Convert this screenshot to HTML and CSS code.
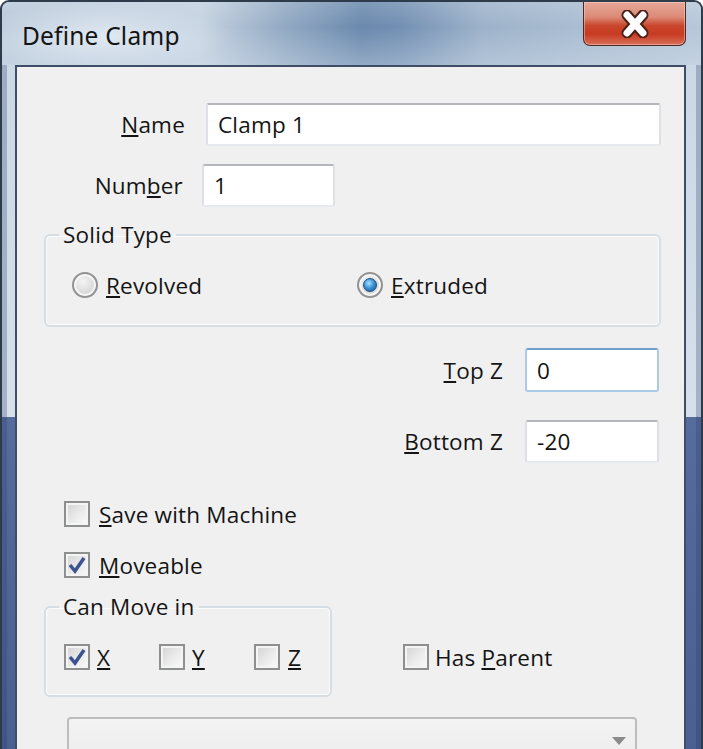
FILE: index.html
```html
<!DOCTYPE html>
<html>
<head>
    <meta charset="utf-8">
    <link rel="stylesheet" href="styles.css">
</head>
<body>

<div class="window">
    <div class="titlebar">
        <span class="title">Define Clamp</span>
        <div class="close_btn">
            <svg width="32" height="28" viewBox="0 0 32 28">
                <path d="M8 5 L24 23 M24 5 L8 23" stroke="#4a2119" stroke-width="11" stroke-linecap="round" fill="none"/>
                <path d="M8 5 L24 23 M24 5 L8 23" stroke="#ffffff" stroke-width="7" stroke-linecap="round" fill="none"/>
            </svg>
        </div>
    </div>

    <div class="client">
        <div class="row row_name">
            <label class="lbl lbl_name"><u>N</u>ame</label>
            <div class="edit edit_name">Clamp 1</div>
        </div>
        <div class="row row_number">
            <label class="lbl lbl_number">Num<u>b</u>er</label>
            <div class="edit edit_number">1</div>
        </div>

        <fieldset class="group group_solid">
            <legend>Solid Type</legend>
            <div class="radios">
                <div class="opt opt_revolved"><span class="radio"></span><span><u>R</u>evolved</span></div>
                <div class="opt"><span class="radio checked"></span><span><u>E</u>xtruded</span></div>
            </div>
        </fieldset>

        <div class="row row_topz">
            <label class="lbl lbl_z"><u>T</u>op Z</label>
            <div class="edit edit_z focused">0</div>
        </div>
        <div class="row row_bottomz">
            <label class="lbl lbl_z"><u>B</u>ottom Z</label>
            <div class="edit edit_z">-20</div>
        </div>

        <div class="check_row row_save">
            <span class="check"></span><span><u>S</u>ave with Machine</span>
        </div>
        <div class="check_row row_move">
            <span class="check">
                <svg width="22" height="22" viewBox="0 0 22 22"><path d="M4 11 L9 17 L18 4" stroke="#3b5490" stroke-width="3.5" fill="none"/></svg>
            </span><span><u>M</u>oveable</span>
        </div>

        <div class="move_row">
            <fieldset class="group group_move">
                <legend>Can Move in</legend>
                <div class="axes">
                    <div class="opt axis">
                        <span class="check">
                            <svg width="22" height="22" viewBox="0 0 22 22"><path d="M4 11 L9 17 L18 4" stroke="#3b5490" stroke-width="3.5" fill="none"/></svg>
                        </span><span><u>X</u></span>
                    </div>
                    <div class="opt axis"><span class="check"></span><span><u>Y</u></span></div>
                    <div class="opt"><span class="check"></span><span><u>Z</u></span></div>
                </div>
            </fieldset>
            <div class="opt has_parent"><span class="check"></span><span>Has <u>P</u>arent</span></div>
        </div>

        <div class="combo">
            <span class="arrow"></span>
        </div>
    </div>
</div>

</body>
</html>
```

FILE: styles.css
```css
body {
    margin: 0;
    background: #ffffff;
    font-family: "Open Sans", "Noto Sans", sans-serif;
    font-size: 22.5px;
    letter-spacing: 0.2px;
    color: #141414;
}
.window {
    width: 703px;
    height: 749px;
    box-sizing: border-box;
    border: 2px solid #2e3b4b;
    border-bottom: none;
    border-radius: 9px 9px 0 0;
    overflow: hidden;
    display: flex;
    flex-direction: column;
    background:
        linear-gradient(to right, rgba(40, 60, 100, 0.28) 0, rgba(40, 60, 100, 0.28) 5px, transparent 5px, transparent calc(100% - 5px), rgba(40, 60, 100, 0.28) calc(100% - 5px)),
        linear-gradient(to bottom, #c9d6e5 0, #d6e0eb 415px, #566c9d 415px, #4b5f91 100%);
}
.titlebar {
    height: 63px;
    flex: none;
    display: flex;
    justify-content: space-between;
    align-items: flex-start;
    background:
        radial-gradient(ellipse 130px 34px at 100px 34px, rgba(235, 242, 248, 0.75), rgba(235, 242, 248, 0) 100%),
        linear-gradient(to bottom, rgba(255, 255, 255, 0.15) 0, rgba(255, 255, 255, 0) 40%, rgba(220, 230, 240, 0.35) 100%),
        linear-gradient(to right, #b9c9da 0, #c3d1e0 200px, #93aac4 280px, #6a89ad 360px, #7390b3 400px, #9db2ca 480px, #aabdd2 580px, #b7c7d9 100%);
}
.title {
    padding: 17px 0 0 20px;
    font-family: "Noto Sans", "Open Sans", sans-serif;
    font-size: 24.5px;
    letter-spacing: 0.2px;
    color: #141414;
}
.close_btn {
    width: 101px;
    height: 43px;
    margin-right: 15px;
    border: 1px solid #4b2a24;
    border-top: none;
    border-radius: 0 0 7px 7px;
    display: flex;
    justify-content: center;
    align-items: center;
    background: linear-gradient(to bottom, #e5a898 0, #dc8a77 35%, #c9462c 55%, #c73b22 75%, #d9705a 100%);
    box-shadow: inset 0 0 0 1px rgba(255, 220, 210, 0.45);
}
.client {
    flex: 1;
    margin: 0 15px 0 13px;
    border: 2px solid #3d4e66;
    border-bottom: none;
    background: #f0f0f0;
    overflow: hidden;
}
.row {
    display: flex;
    align-items: center;
    height: 43px;
}
.lbl {
    text-align: right;
}
.edit {
    box-sizing: border-box;
    height: 43px;
    padding-left: 10px;
    display: flex;
    align-items: center;
    background: #ffffff;
    border: 2px solid #dde0e5;
    border-top-color: #b3b6bb;
    border-bottom-color: #e6e9ed;
    border-radius: 3px;
}
.edit.focused {
    border-color: #a9cbe8;
    border-top-color: #6f9fca;
}
.row_name {
    margin-top: 36px;
}
.lbl_name {
    width: 168px;
    margin-right: 21px;
}
.edit_name {
    width: 455px;
}
.row_number {
    margin-top: 18px;
}
.lbl_number {
    width: 166px;
    margin-right: 19px;
}
.edit_number {
    width: 133px;
}

.group {
    margin: 0;
    padding: 0;
    border: 2px solid #d6dde3;
    border-radius: 6px;
    box-shadow: inset 0 0 0 1px #fbfbfb;
}
.group legend {
    margin-left: 13px;
    padding: 0 4px;
    line-height: 28px;
}
.group_solid {
    margin: 14px 0 0 27px;
    width: 617px;
    box-sizing: border-box;
    padding: 21px 0 25px 0;
}
.radios {
    display: flex;
    height: 30px;
    padding-left: 26px;
}
.opt {
    display: flex;
    align-items: center;
    gap: 8px;
    height: 30px;
}
.opt_revolved {
    width: 285px;
}
.radio {
    box-sizing: border-box;
    width: 26px;
    height: 26px;
    border-radius: 50%;
    border: 2px solid #939393;
    background: radial-gradient(circle at 40% 35%, #f4f4f4 0, #dcdcdc 55%, #c4c4c4 100%);
    box-shadow: inset 0 0 0 2px #f6f6f6;
    display: flex;
    justify-content: center;
    align-items: center;
}
.radio.checked::after {
    content: "";
    width: 12px;
    height: 12px;
    border-radius: 50%;
    border: 1px solid #1d4c7c;
    background: radial-gradient(circle at 40% 35%, #a8e2ff 0, #3d95d6 45%, #0f4f8e 100%);
}
.row_topz {
    margin-top: 21px;
    height: 44px;
}
.row_bottomz {
    margin-top: 28px;
}
.lbl_z {
    width: 486px;
    margin-right: 22px;
}
.edit_z {
    width: 134px;
    height: 44px;
}
.edit_z:not(.focused) {
    height: 43px;
}

.check_row {
    display: flex;
    align-items: center;
    gap: 9px;
    height: 30px;
    padding-left: 47px;
}
.row_save {
    margin-top: 36px;
}
.row_move {
    margin-top: 21px;
}
.check {
    box-sizing: border-box;
    width: 26px;
    height: 26px;
    border: 2px solid #8e8f8f;
    background: linear-gradient(135deg, #d2d2d2 0, #ededed 60%, #fafafa 100%);
    box-shadow: inset 0 0 0 2px #f4f4f4;
    display: flex;
    justify-content: center;
    align-items: center;
}

.move_row {
    display: flex;
    align-items: flex-end;
    margin-top: 13px;
}
.group_move {
    margin-left: 27px;
    width: 288px;
    box-sizing: border-box;
    padding: 21px 0 23px 0;
}
.axes {
    display: flex;
    padding-left: 18px;
}
.axis {
    width: 95px;
    gap: 7px;
}
.has_parent {
    margin: 0 0 25px 71px;
    gap: 6px;
}

.combo {
    box-sizing: border-box;
    margin: 20px 0 0 50px;
    width: 570px;
    height: 48px;
    border: 2px solid #bdbdbd;
    border-radius: 4px;
    background: linear-gradient(to bottom, #f3f3f3, #ececec);
    display: flex;
    justify-content: flex-end;
    align-items: center;
    padding-right: 9px;
}
.arrow {
    width: 0;
    height: 0;
    border-left: 7px solid transparent;
    border-right: 7px solid transparent;
    border-top: 8px solid #8a8a8a;
}
```
